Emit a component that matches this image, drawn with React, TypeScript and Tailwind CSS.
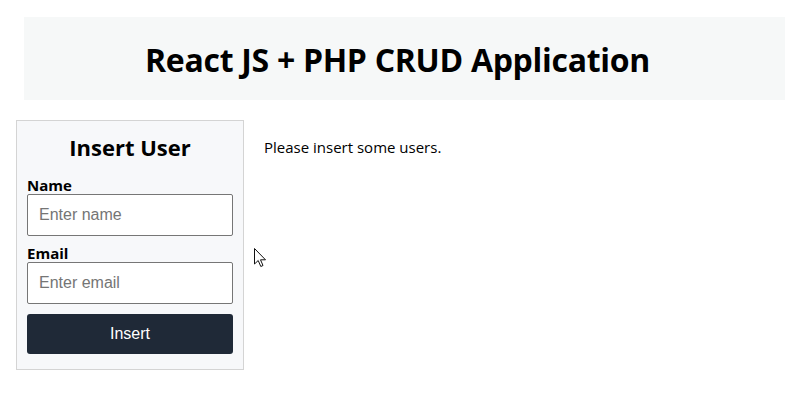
import React from 'react';

const sans = "font-['Open_Sans','Noto_Sans',sans-serif]";

export default function App() {
    return (
        <div className={`relative min-h-[407px] w-[794px] bg-white ${sans}`}>
            <div className="pt-[17px] pl-[24px] pr-[9px]">
                <header className="h-[83px] bg-[#f6f8f8] flex items-center justify-center">
                    <h1 className="text-[32px] font-bold text-black tracking-[-0.3px] -ml-[14px] mt-[3px]">
                        React JS + PHP CRUD Application
                    </h1>
                </header>
            </div>

            <div className="flex items-start mt-[20px] pl-[16px]">
                <form className="w-[228px] h-[250px] border border-[#d4d4d4] bg-[#f7f8fa] px-[10px] pt-[10px]">
                    <h2 className="text-center text-[22px] font-bold leading-[32px] text-black">Insert User</h2>
                    <label className="block mt-[14px] text-[15px] font-bold leading-[16px] text-black">Name</label>
                    <input
                        placeholder="Enter name"
                        className="block w-[206px] h-[42px] mt-[1px] bg-white border border-[#767676] rounded-[2px] px-[11px] font-['Liberation_Sans',Arial,sans-serif] text-[16px] placeholder:text-[#757575]"
                    />
                    <label className="block mt-[9px] text-[15px] font-bold leading-[16px] text-black">Email</label>
                    <input
                        placeholder="Enter email"
                        className="block w-[206px] h-[42px] mt-[1px] bg-white border border-[#767676] rounded-[2px] px-[11px] font-['Liberation_Sans',Arial,sans-serif] text-[16px] placeholder:text-[#757575]"
                    />
                    <button
                        type="button"
                        className="block w-[206px] h-[40px] mt-[10px] bg-[#1f2937] rounded-[3px] text-white text-[16px] font-['Liberation_Sans',Arial,sans-serif]"
                    >
                        Insert
                    </button>
                </form>
                <p className="ml-[20px] mt-[16px] text-[15px] text-black">Please insert some users.</p>
            </div>

            {/* mouse pointer */}
            <svg className="absolute left-[254px] top-[248px]" width="13" height="20" viewBox="0 0 13 20">
                <path d="M0.5 0.5 L0.5 16 L4.2 12.5 L6.8 18.5 L9 17.5 L6.5 11.8 L11.5 11.8 Z" fill="white" stroke="#111" strokeWidth="1" strokeLinejoin="round" />
            </svg>
        </div>
    );
}
